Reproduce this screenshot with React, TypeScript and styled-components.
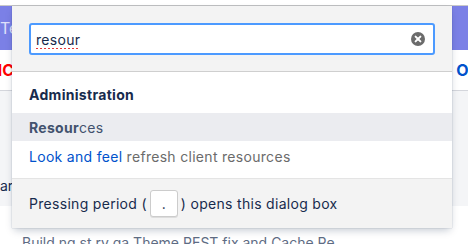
import React from "react";
import styled, { createGlobalStyle } from "styled-components";

const Global = createGlobalStyle`
  html, body { margin: 0; padding: 0; background: #fff; }
  body { font-family: Inter, "Liberation Sans", Arial, sans-serif; -webkit-font-smoothing: antialiased; }
  #root { width: 468px; height: 244px; overflow: hidden; position: relative; }
`;

const Page = styled.div`
  display: flex;
  flex-direction: column;
  width: 468px;
  height: 244px;
  overflow: hidden;
  padding-top: 5px;
  box-sizing: border-box;
  & > * { flex-shrink: 0; }
`;

const TopRule = styled.div`
  height: 1px;
  background: #c9c9c9;
`;

const Header = styled.div`
  height: 44px;
  background: #7b80e6;
  display: flex;
  align-items: center;
  color: #dfe0fb;
  font-size: 16px;
`;

const Nav = styled.div`
  height: 40px;
  display: flex;
  align-items: center;
  justify-content: space-between;
  border-bottom: 1px solid #d4d6dc;
  font-weight: 700;
  font-size: 16px;
`;

const NavItem = styled.span<{ $tone: string; $side: "left" | "right" }>`
  color: ${(p) => p.$tone};
  margin-${(p) => p.$side}: -10px;
`;

const Body = styled.div`
  height: 115px;
  background: #f4f5f7;
  display: flex;
  align-items: flex-end;
  padding-bottom: 12px;
  box-sizing: border-box;
  font-size: 14px;
  color: #172b4d;
`;

const Lower = styled.div`
  padding: 28px 0 0 22px;
  font-size: 14px;
  color: #5e6c84;
  white-space: nowrap;
`;

const Dialog = styled.div`
  position: absolute;
  left: 12px;
  top: 6px;
  width: 440px;
  background: #fff;
  box-shadow: 0 4px 8px -2px rgba(9, 30, 66, 0.25), 0 0 1px rgba(9, 30, 66, 0.31);
  display: flex;
  flex-direction: column;
  letter-spacing: 0.3px;
`;

const SearchBar = styled.div`
  background: #f3f3f3;
  padding: 17px 17px 16px 17px;
  border-bottom: 1px solid #cfcfcf;
`;

const Field = styled.div`
  height: 32px;
  box-sizing: border-box;
  border: 2px solid #4c9aff;
  border-radius: 3px;
  background: #fff;
  display: flex;
  align-items: center;
  padding: 0 8px 0 5px;
`;

const Input = styled.input`
  flex: 1;
  border: 0;
  outline: 0;
  font-family: inherit;
  font-size: 14px;
  letter-spacing: 0.3px;
  color: #172b4d;
  padding: 0;
  height: 24px;
  /* red dotted spell-check squiggle under the typed word */
  background: #fff
    repeating-linear-gradient(90deg, #e5383b 0 2px, transparent 2px 4px)
    no-repeat 0 21px / 44px 1px;
`;

const Clear = styled.span`
  width: 14px;
  height: 14px;
  display: flex;
`;

const Results = styled.div`
  display: flex;
  flex-direction: column;
  padding-bottom: 6px;
`;

const GroupTitle = styled.div`
  font-size: 14px;
  font-weight: 700;
  color: #172b4d;
  padding: 14px 17px 10px;
`;

const Row = styled.div<{ $active?: boolean }>`
  font-size: 14px;
  padding: 0 17px;
  height: ${(p) => (p.$active ? "28px" : "31px")};
  display: flex;
  align-items: center;
  background: ${(p) => (p.$active ? "#ebecf0" : "#fff")};
  color: ${(p) => (p.$active ? "#42526e" : "#6b6b6b")};
  white-space: pre;
`;

const Match = styled.b`
  font-weight: 700;
`;

const Link = styled.span`
  color: #0052cc;
`;

const Footer = styled.div`
  border-top: 1px solid #e4e4e4;
  background: #f3f3f3;
  height: 49px;
  display: flex;
  align-items: center;
  padding: 0 17px;
  font-size: 14px;
  color: #172b4d;
  white-space: pre;
`;

const Key = styled.kbd`
  display: inline-flex;
  align-items: center;
  justify-content: center;
  width: 28px;
  height: 27px;
  box-sizing: border-box;
  margin: 0 3px;
  background: #fff;
  border: 1px solid #ccc;
  border-radius: 3px;
  box-shadow: 0 1px 0 #ddd;
  font-family: inherit;
  font-size: 14px;
  color: #172b4d;
`;

export default function App() {
  return (
    <>
      <Global />
      <Page>
        <TopRule />
        <Header>Te</Header>
        <Nav>
          <NavItem $tone="red" $side="left">NC</NavItem>
          <NavItem $tone="#0052cc" $side="right">OF</NavItem>
        </Nav>
        <Body>ar</Body>
        <Lower>Build  ng  st  ry  ga  Theme  REST  fix  and  Cache  Re</Lower>
      </Page>
      <Dialog>
        <SearchBar>
          <Field>
            <Input defaultValue="resour" spellCheck={false} />
            <Clear>
              <svg width="14" height="14" viewBox="0 0 14 14">
                <circle cx="7" cy="7" r="7" fill="#6b6b6b" />
                <path d="M4.6 4.6 L9.4 9.4 M9.4 4.6 L4.6 9.4" stroke="#fff" strokeWidth="2" strokeLinecap="round" />
              </svg>
            </Clear>
          </Field>
        </SearchBar>
        <Results>
          <GroupTitle>Administration</GroupTitle>
          <Row $active>
            <Match>Resour</Match>ces
          </Row>
          <Row>
            <Link>Look and feel</Link> refresh client resources
          </Row>
        </Results>
        <Footer>
          Pressing period (<Key>.</Key>) opens this dialog box
        </Footer>
      </Dialog>
    </>
  );
}
